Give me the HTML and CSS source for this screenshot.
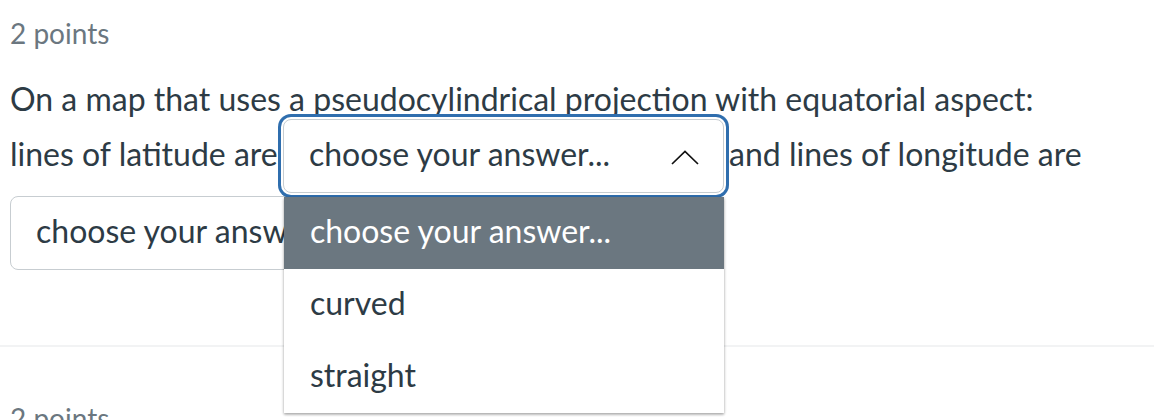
FILE: index.html
```html
<!DOCTYPE html>
<html lang="en">
<head>
<meta charset="utf-8">
<title>Quiz question</title>
<link rel="stylesheet" href="styles.css">
</head>
<body>
<div class="quiz">
  <div class="question">
    <div class="points">2 points</div>
    <div class="prompt">
      <div class="line">On a map that uses a pseudocylindrical projection with equatorial aspect:</div>
      <div class="line">lines of latitude are <span class="select-wrap"><span class="select is-focused"><span class="select-value">choose your answer...</span><svg class="chevron" width="28" height="15" viewBox="0 0 28 15"><polyline points="1,14 14,1.5 27,14" fill="none" stroke="#111" stroke-width="1.7"/></svg></span><ul class="menu"><li class="menu-item is-active">choose your answer...</li><li class="menu-item">curved</li><li class="menu-item">straight</li></ul></span> and lines of longitude are <span class="select"><span class="select-value">choose your answer...</span><svg class="chevron" width="28" height="15" viewBox="0 0 28 15"><polyline points="1,1 14,13.5 27,1" fill="none" stroke="#111" stroke-width="1.7"/></svg></span></div>
    </div>
  </div>
  <div class="question">
    <div class="points">2 points</div>
  </div>
</div>
</body>
</html>
```

FILE: styles.css
```css
html, body {
  margin: 0;
  padding: 0;
  background: #ffffff;
}

body {
  font-family: Lato, "Noto Sans", sans-serif;
  color: #2d3b45;
  overflow: hidden;
}

.question {
  padding: 17px 10px 72px;
  border-bottom: 2px solid #f2f3f4;
}

.question + .question {
  margin-top: 38px;
}

.points {
  font-size: 28px;
  line-height: 1.2;
  color: #6b7780;
}

.prompt {
  margin-top: 29.8px;
  font-size: 32px;
  line-height: 1.2;
}

.line {
  margin: 0;
}

.select-wrap {
  position: relative;
  display: inline-block;
  margin: 0 -3px 3px -3px;
}

.select {
  display: inline-flex;
  align-items: flex-start;
  justify-content: space-between;
  box-sizing: border-box;
  width: 441px;
  height: 74px;
  padding: 15px 24px 0 25px;
  border: 1px solid #c7cdd1;
  border-radius: 8px;
  background: #ffffff;
  margin-bottom: 3px;
  vertical-align: baseline;
}

.select-wrap .select {
  margin-bottom: 0;
}

.select.is-focused {
  box-shadow: 0 0 0 2px #ffffff, 0 0 0 5px #2f6eae;
}

.select-value {
  white-space: nowrap;
}

.chevron {
  flex: none;
  margin-top: 15px;
}

.menu {
  position: absolute;
  z-index: 2;
  top: calc(100% + 4px);
  left: 1px;
  width: 440px;
  margin: 0;
  padding: 0;
  list-style: none;
  background: #ffffff;
  box-shadow: 0 1px 3px rgba(0, 0, 0, 0.3), 0 2px 2px rgba(0, 0, 0, 0.12);
}

.menu-item {
  height: 72px;
  box-sizing: border-box;
  padding: 15px 26px 0;
  white-space: nowrap;
}

.menu-item.is-active {
  background: #6b7780;
  color: #ffffff;
}
```
